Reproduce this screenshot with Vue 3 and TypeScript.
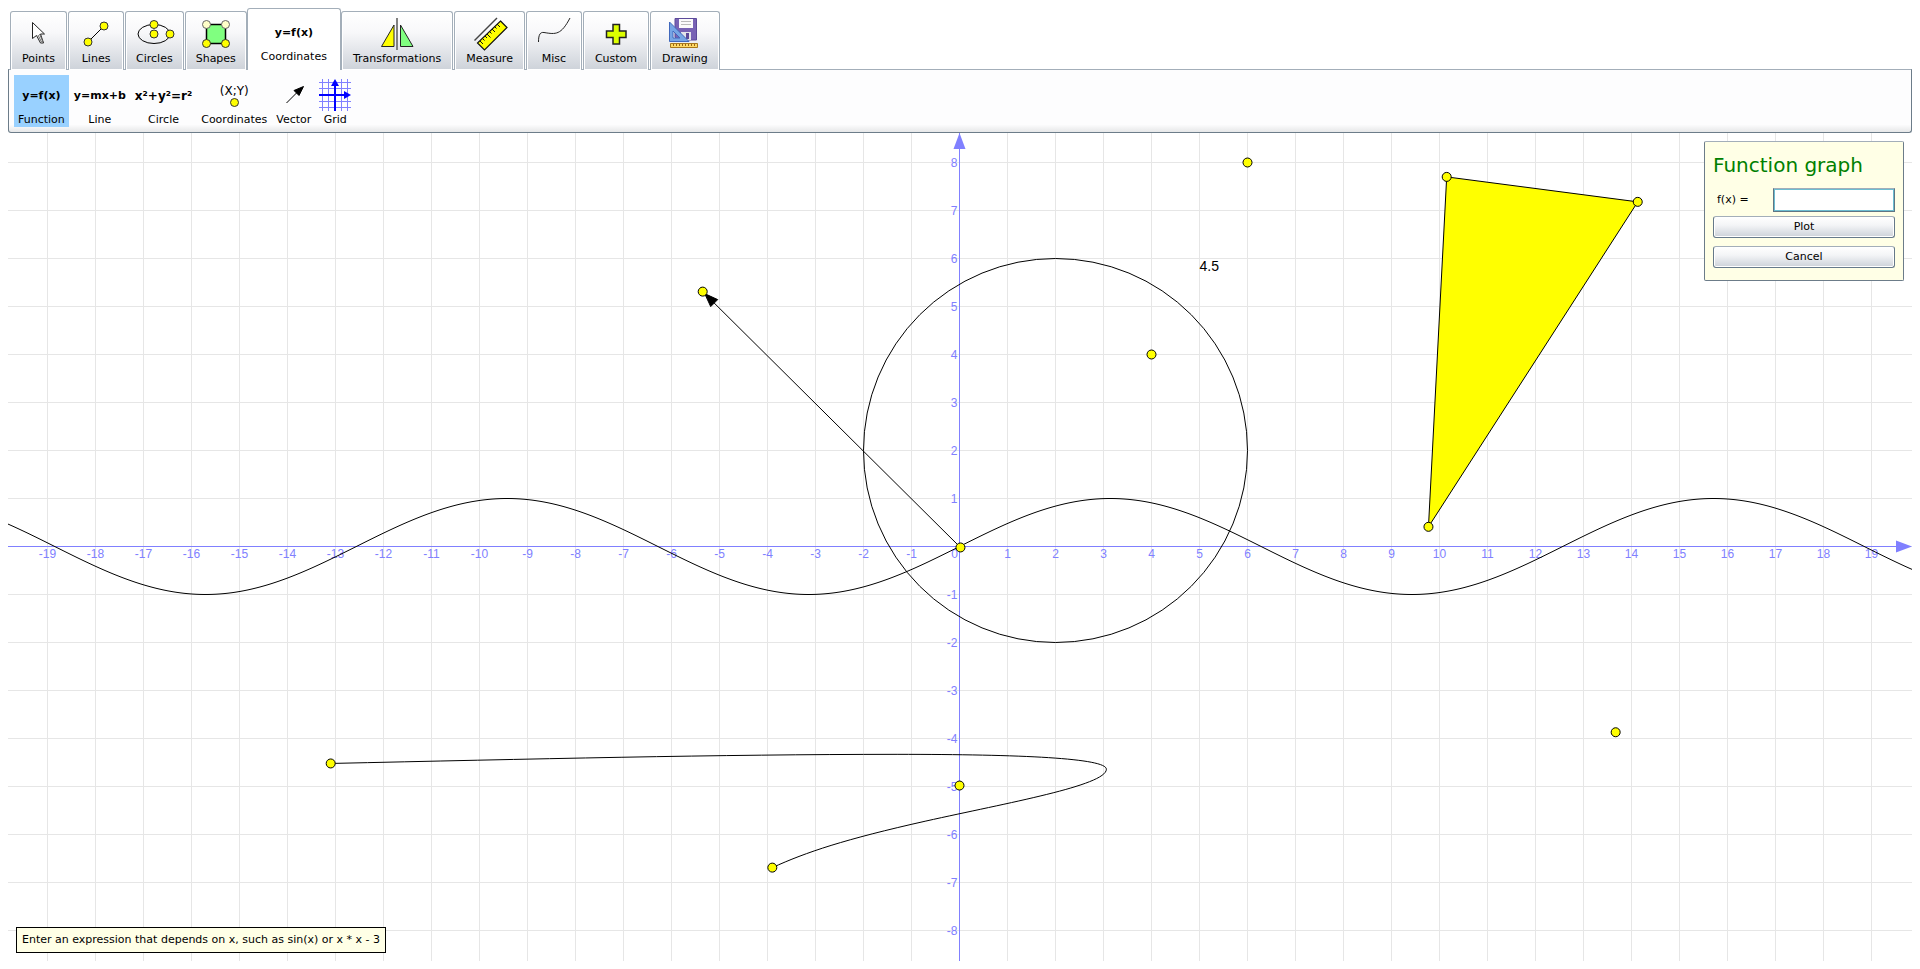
<script setup lang="ts">
import { computed, onBeforeUnmount, onMounted, ref } from 'vue'

interface Point { x: number; y: number }

const tabs = ['Points', 'Lines', 'Circles', 'Shapes', 'Coordinates', 'Transformations', 'Measure', 'Misc', 'Custom', 'Drawing']
const tools = ['Function', 'Line', 'Circle', 'Coordinates', 'Vector', 'Grid']
const formulas: Record<string, string> = { Function: 'y=f(x)', Line: 'y=mx+b', Circle: 'x²+y²=r²' }

const activeTab = ref('Coordinates')
const activeTool = ref('Function')
const expression = ref('')

const UNIT = 48
const board = ref<HTMLElement | null>(null)
const width = ref(1904)
const height = ref(828)
let observer: ResizeObserver | undefined

function measure() {
  if (!board.value) return
  width.value = board.value.clientWidth
  height.value = board.value.clientHeight
}
onMounted(() => {
  measure()
  observer = new ResizeObserver(measure)
  if (board.value) observer.observe(board.value)
})
onBeforeUnmount(() => observer?.disconnect())

const ox = computed(() => Math.floor(width.value / 2) - 0.5)
const oy = computed(() => Math.floor(height.value / 2) - 0.5)
const sx = (x: number) => ox.value + x * UNIT
const sy = (y: number) => oy.value - y * UNIT

const range = (n: number) => Array.from({ length: 2 * n + 1 }, (_, i) => i - n)
const columns = computed(() => range(Math.floor((width.value / 2 - 1) / UNIT)))
const rows = computed(() => range(Math.floor((height.value / 2 - 1) / UNIT)))

const sine = computed(() => {
  const out: string[] = []
  for (let px = 0; px <= width.value; px += 4) {
    const y = Math.sin((px - ox.value) / UNIT / 2)
    out.push(`${px},${(oy.value - y * UNIT).toFixed(2)}`)
  }
  return out.join(' ')
})

const triangle: Point[] = [{ x: 10.15, y: 7.7 }, { x: 14.13, y: 7.18 }, { x: 9.77, y: 0.41 }]
const trianglePoints = computed(() => triangle.map(p => `${sx(p.x)},${sy(p.y)}`).join(' '))
const origin: Point = { x: 0.02, y: -0.02 }
const vectorTip: Point = { x: -5.35, y: 5.31 }
const curveEnds: Point[] = [{ x: -13.1, y: -4.52 }, { x: -3.9, y: -6.69 }]
const curve = computed(() => {
  const p = (x: number, y: number) => `${sx(x)} ${sy(y)}`
  return `M${p(-13.1, -4.52)} C${p(-9, -4.43)} ${p(-5, -4.33)} ${p(-1.3, -4.33)} C${p(1.3, -4.33)} ${p(3.06, -4.41)} ${p(3.06, -4.64)} C${p(3.06, -4.98)} ${p(1, -5.34)} ${p(-0.7, -5.72)} S${p(-3.2, -6.37)} ${p(-3.9, -6.69)}`
})
const points: Point[] = [...triangle, origin, vectorTip, ...curveEnds, { x: 6, y: 8 }, { x: 4, y: 4 }, { x: 0, y: -4.98 }, { x: 13.67, y: -3.87 }]
</script>

<template>
  <main class="app">
    <nav class="tabs" role="tablist" aria-label="Tool groups">
      <button v-for="tab in tabs" :key="tab" type="button" role="tab" class="tab" :class="['tab-' + tab.toLowerCase(), { active: tab === activeTab }]" :aria-selected="tab === activeTab" @click="activeTab = tab">
        <span v-if="tab === 'Coordinates'" class="icon formula">y=f(x)</span>
        <svg v-else class="icon" viewBox="0 0 32 32" aria-hidden="true">
          <g v-if="tab === 'Points'">
            <path d="M9.500 4.500V20.500L13.500 17.500L17.500 25H20.500L17.500 16H21.500Z" fill="#fff" stroke="#222" />
            <path d="M15 17l3.500 7M16.500 16l3.500 8" stroke="#666" fill="none" />
          </g>
          <g v-else-if="tab === 'Lines'" stroke="#000">
            <path d="M8 24L24 8" /><circle class="dot" cx="8" cy="24" r="4" /><circle class="dot" cx="24" cy="8" r="4" />
          </g>
          <g v-else-if="tab === 'Circles'" stroke="#000">
            <ellipse cx="16" cy="16" rx="16" ry="9.500" fill="none" /><circle class="dot" cx="16" cy="6.500" r="4" /><circle class="dot" cx="16" cy="16" r="4" /><circle class="dot" cx="32" cy="16" r="4" />
          </g>
          <g v-else-if="tab === 'Shapes'" stroke="#000">
            <path d="M6.500 6.500h19v19h-19z" fill="#80ff80" stroke-width="1.500" /><circle cx="6.500" cy="6.500" r="4" fill="#ffffc8" stroke="#666" /><circle cx="25.500" cy="6.500" r="4" fill="#ffffc8" stroke="#666" /><circle class="dot" cx="6.500" cy="25.500" r="4" /><circle class="dot" cx="25.500" cy="25.500" r="4" />
          </g>
          <g v-else-if="tab === 'Transformations'" stroke="#222">
            <path d="M13 7v21.500H.5z" fill="#ff0" /><path d="M19.500 7v21.500H32z" fill="#80ff80" /><path d="M16 0v32" stroke="#808080" stroke-width="2" />
          </g>
          <g v-else-if="tab === 'Measure'" stroke="#111" fill="none">
            <path d="M.5 22.500L23 0" stroke="#444" stroke-width="1.500" /><path d="M26.500 3L33 9.500L10.500 32L3.500 25Z" fill="#ff0" stroke-width="1.200" />
            <path d="M6 23l3 3M8.500 20.500l2 2M11 18l2 2M13 16l3.500 3.500M15.500 13.500l2 2M18 11l3 3M20.500 8.500l2 2M23 6l3 3" />
          </g>
          <path v-else-if="tab === 'Misc'" d="M.5 24C.5 16 2.500 14 6 14.500C18 16.500 23 17 32 0" fill="none" stroke="#222" />
          <path v-else-if="tab === 'Custom'" d="M13 6.500h6.500v6.500h6.500v6.500h-6.500v6.500H13v-6.500H6.500V13H13z" fill="#df0" stroke="#222" stroke-width="1.500" />
          <g v-else>
            <path d="M6 .5h21.500v21.500H9L6 19z" fill="#7862b4" stroke="#5c4a9a" /><path d="M10 1h14v9H10z" fill="#fbfbfb" /><path d="M12 3.500h10M12 6.500h10" stroke="#bbb" /><path d="M12 14h10v8H12z" fill="#e4e4ea" /><path d="M17 15h3v6h-3z" fill="#5c4a9a" />
            <path d="M.5 4v19.500h19.500zM4 13v7h7z" fill="#76a5e5" fill-rule="evenodd" stroke="#4168bc" /><path d="M1.500 25.500h27v4h-27z" fill="#fed966" stroke="#a8781c" /><path d="M4.500 26v2M7.500 26v2M10.500 26v2M13.500 26v2M16.500 26v2M19.500 26v2M22.500 26v2M25.500 26v2" stroke="#9a6517" />
          </g>
        </svg>
        <span class="caption">{{ tab }}</span>
      </button>
    </nav>

    <section class="ribbon" aria-label="Coordinate tools">
      <button v-for="tool in tools" :key="tool" type="button" class="tool" :class="[tool.toLowerCase(), { active: tool === activeTool }]" :aria-pressed="tool === activeTool" @click="activeTool = tool">
        <span v-if="formulas[tool]" class="icon formula">{{ formulas[tool] }}</span>
        <span v-else-if="tool === 'Coordinates'" class="icon pair">(X;Y)
          <svg class="pin" viewBox="0 0 9 9" aria-hidden="true"><circle class="dot" cx="4.500" cy="4.500" r="4" /></svg>
        </span>
        <svg v-else class="icon" viewBox="0 0 32 32" aria-hidden="true">
          <path v-if="tool === 'Vector'" d="M8.500 24L20 12.500M25.500 7.500L16 11.500L21 16.500Z" stroke="#000" />
          <g v-else>
            <path d="M3.500 0v32M9.500 0v32M22.500 0v32M28.500 0v32M0 3.500h32M0 9.500h32M0 22.500h32M0 28.500h32" stroke="#8080ff" /><path d="M16 4v28M0 16h28" stroke="#00f" stroke-width="2" /><path d="M12 7l4-7l4 7zM25 12l7 4l-7 4z" fill="#00f" />
          </g>
        </svg>
        <span class="caption">{{ tool }}</span>
      </button>
    </section>

    <section ref="board" class="board" aria-label="Drawing">
      <svg class="plot" :width="width" :height="height">
        <g class="grid">
          <line v-for="c in columns" :key="'c' + c" :x1="sx(c)" :x2="sx(c)" y1="0" :y2="height" />
          <line v-for="r in rows" :key="'r' + r" x1="0" :x2="width" :y1="sy(r)" :y2="sy(r)" />
        </g>
        <g class="axes">
          <line :x1="ox" :x2="ox" y1="0" :y2="height" />
          <line x1="0" :x2="width - 16" :y1="oy" :y2="oy" />
          <path :d="`M${ox} 0l6 16h-12zM${width} ${oy}l-16 -6v12z`" />
          <text v-for="c in columns" :key="'x' + c" :x="c === 0 ? ox - 5 : sx(c)" :y="oy + 11" text-anchor="middle">{{ c }}</text>
          <template v-for="r in rows" :key="'y' + r">
            <text v-if="r !== 0" :x="ox - 2" :y="sy(r) + 4" text-anchor="end">{{ r }}</text>
          </template>
        </g>
        <g class="figures">
          <polygon :points="trianglePoints" class="area" />
          <circle :cx="sx(2)" :cy="sy(2)" :r="4 * UNIT" />
          <polyline :points="sine" />
          <path :d="curve" />
          <line :x1="sx(origin.x)" :y1="sy(origin.y)" :x2="sx(vectorTip.x)" :y2="sy(vectorTip.y)" />
          <path class="head" :d="`M${sx(vectorTip.x) + 2} ${sy(vectorTip.y) + 2}l13 6l-7 7z`" />
        </g>
        <circle v-for="(p, i) in points" :key="i" class="dot point" :cx="sx(p.x)" :cy="sy(p.y)" r="4.500" />
        <text class="measure" :x="sx(5)" :y="sy(5.73)">4.5</text>
      </svg>

      <form class="panel" @submit.prevent>
        <h1>Function graph</h1>
        <div class="field">
          <label for="expression">f(x) =</label>
          <input id="expression" v-model="expression" type="text" autocomplete="off" />
        </div>
        <button type="submit">Plot</button>
        <button type="button">Cancel</button>
      </form>
      <p class="hint">Enter an expression that depends on x, such as sin(x) or x * x - 3</p>
    </section>
  </main>
</template>

<style>
body { margin: 0; background: #fff; }
</style>

<style scoped>
* { box-sizing: border-box; }
.app { display: flex; flex-direction: column; min-height: 100vh; padding: 8px; font: 11px/14px Verdana, "DejaVu Sans", sans-serif; color: #000; }
button { font: inherit; color: inherit; margin: 0; }
.tabs { display: flex; align-items: flex-end; height: 62px; padding-left: 2px; position: relative; }
.tab { display: flex; flex-direction: column; align-items: center; height: 59px; padding: 6px 11px 4px; margin-right: 1px; border: 1px solid #a3aeb9; border-bottom: 0; border-radius: 3px 3px 0 0; background: linear-gradient(#fff, #f8f8fa 35%, #cdd2d9); box-shadow: inset 0 0 0 1px #fff; }
.tab-circles, .tab-shapes { padding-left: 10px; padding-right: 10px; }
.tab.active { z-index: 1; height: 62px; padding: 7px 13px 4px; margin: 0 0 0 -1px; background: #fff; box-shadow: none; }
.icon { display: block; flex: none; width: 32px; height: 32px; overflow: visible; }
.formula { width: auto; font-weight: bold; line-height: 34px; }
.caption { margin-top: 2px; white-space: nowrap; }
.dot { fill: #ff0; stroke: #333; }
.point { stroke: #000; }
.ribbon { display: flex; align-items: flex-start; height: 64px; padding: 5px; margin-top: -1px; border: 1px solid #6c7c89; border-top-color: #a3aeb9; border-radius: 0 0 3px 3px; background: linear-gradient(#fdfdfe 88%, #e6e7e8); }
.tool { display: flex; flex-direction: column; align-items: center; min-height: 52px; padding: 4px 4px 0; border: 0; background: none; }
.tool.active { background: #99d1ff; }
.tool.line, .tool.coordinates { padding-left: 5px; padding-right: 5px; }
.tool.circle .formula { font-size: 12px; }
.pair { width: auto; padding-top: 5px; font-size: 12px; text-align: center; }
.pin { display: block; width: 9px; height: 9px; margin: 0 auto; }
.board { position: relative; flex: 1; min-height: 300px; overflow: hidden; }
.plot { position: absolute; inset: 0; display: block; }
.grid line { stroke: #e6e6e6; }
.axes line { stroke: #8080ff; }
.axes path, .axes text { fill: #8080ff; }
.axes text { font: 12px "Liberation Sans", Arial, sans-serif; }
.figures { fill: none; stroke: #000; }
.figures .area { fill: #ff0; }
.figures .head { fill: #000; }
.measure { font: 14px "Liberation Sans", Arial, sans-serif; }
.panel { position: absolute; top: 8px; right: 8px; display: flex; flex-direction: column; width: 200px; padding: 8px 8px 12px; border: 1px solid #6c7c89; border-top-color: #a3aeb9; border-radius: 2px; background: #ffffe6; }
.panel h1 { margin: 0 0 8px; font-size: 20px; line-height: 30px; font-weight: normal; color: #008000; }
.field { display: flex; align-items: center; justify-content: space-between; margin-bottom: 4px; padding-left: 4px; }
.field input { width: 122px; height: 24px; padding: 2px; border: 1px solid #607583; border-top-color: #a3aeb9; outline: none; box-shadow: inset 0 0 0 1px #6dbdd1; background: #fff; font: inherit; }
.panel button { height: 22px; padding: 0; border: 1px solid #66798a; border-top-color: #a3aeb9; border-radius: 3px; background: linear-gradient(#fff, #f4f5f7 40%, #cdd2d9); box-shadow: inset 0 0 0 1px #fff; }
.panel button + button { margin-top: 8px; }
.hint { position: absolute; left: 8px; bottom: 8px; margin: 0; padding: 5px; border: 1px solid #000; background: #ffffe6; }
</style>
